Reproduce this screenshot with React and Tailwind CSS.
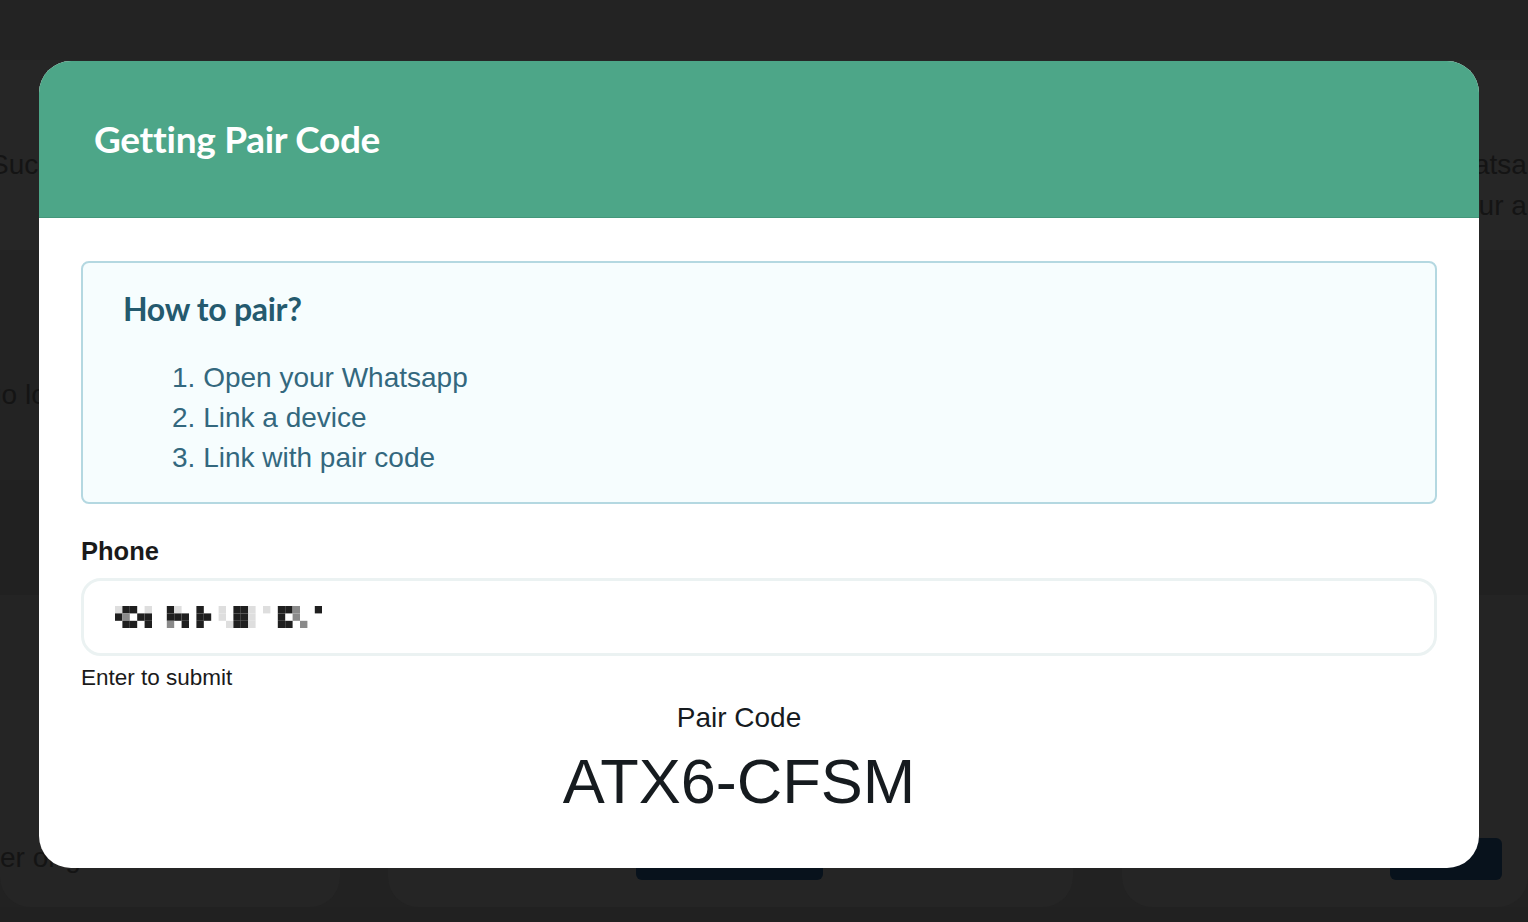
import React from "react";

const lato = { fontFamily: "Lato, 'Noto Sans', sans-serif" };

// blurred phone number mosaic
const mosaicRows = [
  ".## .  #.  #  . ##. . ##-  #",
  "#- ##  ### ## . ##.   # -   ",
  " ## #  - # #   .##.   ## -  ",
];
const shade = { ".": "#dedede", "-": "#8a8a8a", "#": "#1f1f1f" };

function Mosaic() {
  const size = 7.4;
  return (
    <svg width={28 * size} height={3 * size} className="block">
      {mosaicRows.map((row, r) =>
        row.split("").map((c, i) =>
          shade[c] ? (
            <rect key={`${r}-${i}`} x={i * size} y={r * size} width={size} height={size} fill={shade[c]} />
          ) : null
        )
      )}
    </svg>
  );
}

const Backdrop = () => (
  <div className="flex flex-col h-[922px] bg-[#222222] text-[#141414] font-['Liberation_Sans',sans-serif]">
    <div className="h-[60px] bg-[#232323]" />
    <div className="h-[190px] bg-[#262626] flex justify-between items-start pt-[84px] text-[28px] leading-[41px]">
      <span className="-ml-[10px]">Successful</span>
      <div className="flex flex-col items-end -mr-[30px]">
        <span>Whatsapp</span>
        <span>your app</span>
      </div>
    </div>
    <div className="h-[230px] bg-[#232323] flex items-start pt-[128px] text-[28px] leading-[34px]">
      <span className="-ml-[14px]">go log</span>
    </div>
    <div className="h-[115px] bg-[#212121]" />
    <div className="h-[105px] bg-[#242424]" />
    <div className="h-[207px] flex bg-[#222222]">
      <div className="w-[340px] rounded-b-[30px] bg-[#252525] flex items-end pb-[32px] text-[28px] leading-[34px]">
        <span>er or go</span>
      </div>
      <div className="ml-[48px] w-[685px] rounded-b-[30px] bg-[#252525] flex items-end pb-[27px] pl-[248px]">
        <div className="w-[187px] h-[42px] rounded-[6px] bg-[#08121c]" />
      </div>
      <div className="ml-[49px] flex-1 rounded-b-[30px] bg-[#252525] flex items-end pb-[27px] pl-[268px]">
        <div className="w-[112px] h-[42px] rounded-[6px] bg-[#08121c]" />
      </div>
    </div>
    <div className="flex-1 bg-[#212121]" />
  </div>
);

export default function App() {
  return (
    <div className="relative w-[1528px] h-[922px] overflow-hidden">
      <Backdrop />

      {/* Modal */}
      <div className="absolute inset-0 pt-[61px] pl-[39px]">
        <div className="w-[1440px] h-[807px] rounded-[32px] overflow-hidden bg-white flex flex-col">
          <div className="h-[157px] bg-[#4da688] border-b border-[#44977b] flex items-center pl-[55px]">
            <h1 style={lato} className="text-white text-[37px] font-bold tracking-[-0.3px]">
              Getting Pair Code
            </h1>
          </div>

          <div className="flex-1 px-[42px] pt-[43px] font-['Liberation_Sans',sans-serif]">
            <div className="h-[243px] rounded-[8px] border-2 border-[#b4d8e1] bg-[#f6fdfe] pl-[40px] pt-[26px]">
              <h2 style={lato} className="text-[#245a6e] text-[32px] font-bold leading-[40px] tracking-[-0.3px]">
                How to pair?
              </h2>
              <ol className="mt-[29px] pl-[49px] text-[28px] leading-[40px] text-[#33687e]">
                <li>1. Open your Whatsapp</li>
                <li>2. Link a device</li>
                <li>3. Link with pair code</li>
              </ol>
            </div>

            <label className="block mt-[32px] text-[25.5px] font-bold leading-[30px] text-[#1a1a1a]">
              Phone
            </label>
            <div className="mt-[12px] h-[78px] rounded-[20px] border-[3px] border-[#ebf2f2] flex items-center pl-[31px]">
              <Mosaic />
            </div>
            <p className="mt-[9px] text-[22.5px] leading-[26px] text-[#1a1a1a]">Enter to submit</p>

            <div className="flex flex-col items-center pr-[40px] text-[#161b1f]">
              <span className="mt-[10px] text-[28px] leading-[34px]">Pair Code</span>
              <span className="mt-[10px] text-[63px] leading-[72px]">ATX6-CFSM</span>
            </div>
          </div>
        </div>
      </div>
    </div>
  );
}
